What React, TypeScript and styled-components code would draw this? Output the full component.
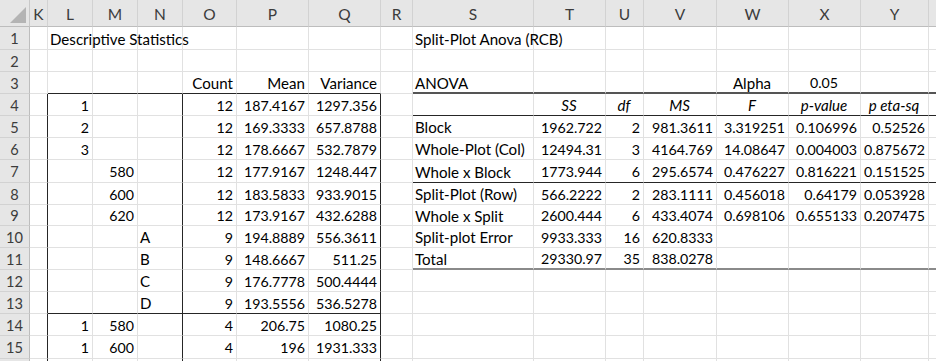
import React from "react";
import styled, { createGlobalStyle, css } from "styled-components";

const Global = createGlobalStyle`
  html, body { margin: 0; padding: 0; background: #ffffff; }
  body { font-family: Lato, "Open Sans", Arial, sans-serif; overflow: hidden; }
`;

const COLS = ["K", "L", "M", "N", "O", "P", "Q", "R", "S", "T", "U", "V", "W", "X", "Y", "Z"];
const WIDTHS = [18, 45, 45, 45, 54, 72, 72, 32, 121, 72, 38, 73, 72, 72, 68, 80];
const ROW_HEIGHTS = [23, 22, 22, 22, 22, 22, 23, 22, 21, 22, 22, 22, 22, 22, 23, 22];

type Align = "l" | "r" | "c";
type CellSpec = { v: string; a?: Align; i?: boolean };
type RowSpec = Partial<Record<string, CellSpec | string>>;

const DATA: Record<number, RowSpec> = {
  1: { L: "Descriptive Statistics", S: "Split-Plot Anova (RCB)" },
  3: {
    O: { v: "Count", a: "r" },
    P: { v: "Mean", a: "r" },
    Q: { v: "Variance", a: "r" },
    S: "ANOVA",
    W: { v: "Alpha", a: "c" },
    X: { v: "0.05", a: "c" },
  },
  4: {
    L: "1", O: "12", P: "187.4167", Q: "1297.356",
    T: { v: "SS", a: "c", i: true },
    U: { v: "df", a: "c", i: true },
    V: { v: "MS", a: "c", i: true },
    W: { v: "F", a: "c", i: true },
    X: { v: "p-value", a: "c", i: true },
    Y: { v: "p eta-sq", a: "c", i: true },
  },
  5: { L: "2", O: "12", P: "169.3333", Q: "657.8788", S: "Block", T: "1962.722", U: "2", V: "981.3611", W: "3.319251", X: "0.106996", Y: "0.52526" },
  6: { L: "3", O: "12", P: "178.6667", Q: "532.7879", S: "Whole-Plot (Col)", T: "12494.31", U: "3", V: "4164.769", W: "14.08647", X: "0.004003", Y: "0.875672" },
  7: { M: "580", O: "12", P: "177.9167", Q: "1248.447", S: "Whole x Block", T: "1773.944", U: "6", V: "295.6574", W: "0.476227", X: "0.816221", Y: "0.151525" },
  8: { M: "600", O: "12", P: "183.5833", Q: "933.9015", S: "Split-Plot (Row)", T: "566.2222", U: "2", V: "283.1111", W: "0.456018", X: "0.64179", Y: "0.053928" },
  9: { M: "620", O: "12", P: "173.9167", Q: "432.6288", S: "Whole x Split", T: "2600.444", U: "6", V: "433.4074", W: "0.698106", X: "0.655133", Y: "0.207475" },
  10: { N: "A", O: "9", P: "194.8889", Q: "556.3611", S: "Split-plot Error", T: "9933.333", U: "16", V: "620.8333" },
  11: { N: "B", O: "9", P: "148.6667", Q: "511.25", S: "Total", T: "29330.97", U: "35", V: "838.0278" },
  12: { N: "C", O: "9", P: "176.7778", Q: "500.4444" },
  13: { N: "D", O: "9", P: "193.5556", Q: "536.5278" },
  14: { L: "1", M: "580", O: "4", P: "206.75", Q: "1080.25" },
  15: { L: "1", M: "600", O: "4", P: "196", Q: "1931.333" },
  16: {},
};

type Bottom = "none" | "dark" | "top2" | "bot2";

function bottomBorder(r: number, c: string): Bottom {
  const inDesc = ["L", "M", "N", "O", "P", "Q"].includes(c);
  const inAnova = ["S", "T", "U", "V", "W", "X", "Y", "Z"].includes(c);
  if (inDesc && (r === 3 || r === 13)) return "dark";
  if (inAnova) {
    if (r === 3) return "top2";
    if (r === 4 || r === 7) return "dark";
    if (r === 11) return "bot2";
  }
  return "none";
}

function rightBorder(r: number, c: string): boolean {
  return r >= 4 && (c === "K" || c === "N" || c === "Q");
}

const Sheet = styled.div`
  display: grid;
  grid-template-columns: 30px ${WIDTHS.map((w) => `${w}px`).join(" ")};
  grid-template-rows: 27px ${ROW_HEIGHTS.map((h) => `${h}px`).join(" ")};
  width: 936px;
  height: 361px;
  overflow: hidden;
  color: #000;
`;

const Corner = styled.div`
  background: #e6e6e6;
  border-right: 1px solid #c8c8c8;
  border-bottom: 1px solid #bdbdbd;
  box-sizing: border-box;
  display: flex;
  align-items: flex-end;
  justify-content: flex-end;
  padding: 0 3px 3px 0;
`;

const ColHead = styled.div`
  background: #e6e6e6;
  border-right: 1px solid #d2d2d2;
  border-bottom: 1px solid #bdbdbd;
  box-sizing: border-box;
  display: flex;
  align-items: center;
  justify-content: center;
  padding-top: 2px;
  color: #3c3c3c;
  font-size: 15.5px;
`;

const RowHead = styled.div`
  background: #e6e6e6;
  border-right: 1px solid #bdbdbd;
  border-bottom: 1px solid #d2d2d2;
  box-sizing: border-box;
  display: flex;
  align-items: center;
  justify-content: center;
  color: #3c3c3c;
  font-size: 14.6px;
  padding-top: 1px;
`;

const bottomStyles: Record<Bottom, ReturnType<typeof css>> = {
  none: css`border-bottom: 1px solid #e1e1e1;`,
  dark: css`border-bottom: 1px solid #262626;`,
  top2: css`border-bottom: 2px solid #555555;`,
  bot2: css`border-bottom: 2px solid #8a8a8a;`,
};

const Cell = styled.div<{
  $align: Align;
  $italic: boolean;
  $numeric: boolean;
  $bottom: Bottom;
  $right: boolean;
}>`
  box-sizing: border-box;
  display: flex;
  align-items: center;
  padding: 1px 3px 0 2px;
  white-space: nowrap;
  overflow: visible;
  position: relative;
  border-right: 1px solid ${(p) => (p.$right ? "#262626" : "#e1e1e1")};
  ${(p) => bottomStyles[p.$bottom]}
  justify-content: ${(p) => (p.$align === "r" ? "flex-end" : p.$align === "c" ? "center" : "flex-start")};
  font-style: ${(p) => (p.$italic ? "italic" : "normal")};
  font-size: ${(p) => (p.$numeric ? "14.2px" : "15.1px")};
`;

const CellText = styled.span`
  position: relative;
  z-index: 1;
`;

function isNumber(s: string) {
  return /^-?\d+(\.\d+)?$/.test(s);
}

export default function App() {
  const rows: React.ReactNode[] = [];
  rows.push(
    <Corner key="corner">
      <svg width="16" height="16" viewBox="0 0 16 16">
        <polygon points="16,0 16,16 0,16" fill="#b4b4b4" />
      </svg>
    </Corner>
  );
  COLS.forEach((c) => rows.push(<ColHead key={`h-${c}`}>{c === "Z" ? "" : c}</ColHead>));
  for (let r = 1; r <= 16; r++) {
    rows.push(<RowHead key={`r-${r}`}>{r === 16 ? "" : r}</RowHead>);
    const spec = DATA[r] || {};
    COLS.forEach((c) => {
      const raw = spec[c];
      const cell: CellSpec | undefined = typeof raw === "string" ? { v: raw } : raw;
      const numeric = !!cell && isNumber(cell.v);
      const align: Align = cell?.a ?? (numeric ? "r" : "l");
      rows.push(
        <Cell
          key={`${c}${r}`}
          $align={align}
          $italic={!!cell?.i}
          $numeric={numeric}
          $bottom={bottomBorder(r, c)}
          $right={rightBorder(r, c)}
        >
          {cell ? <CellText>{cell.v}</CellText> : null}
        </Cell>
      );
    });
  }
  return (
    <>
      <Global />
      <Sheet>{rows}</Sheet>
    </>
  );
}
